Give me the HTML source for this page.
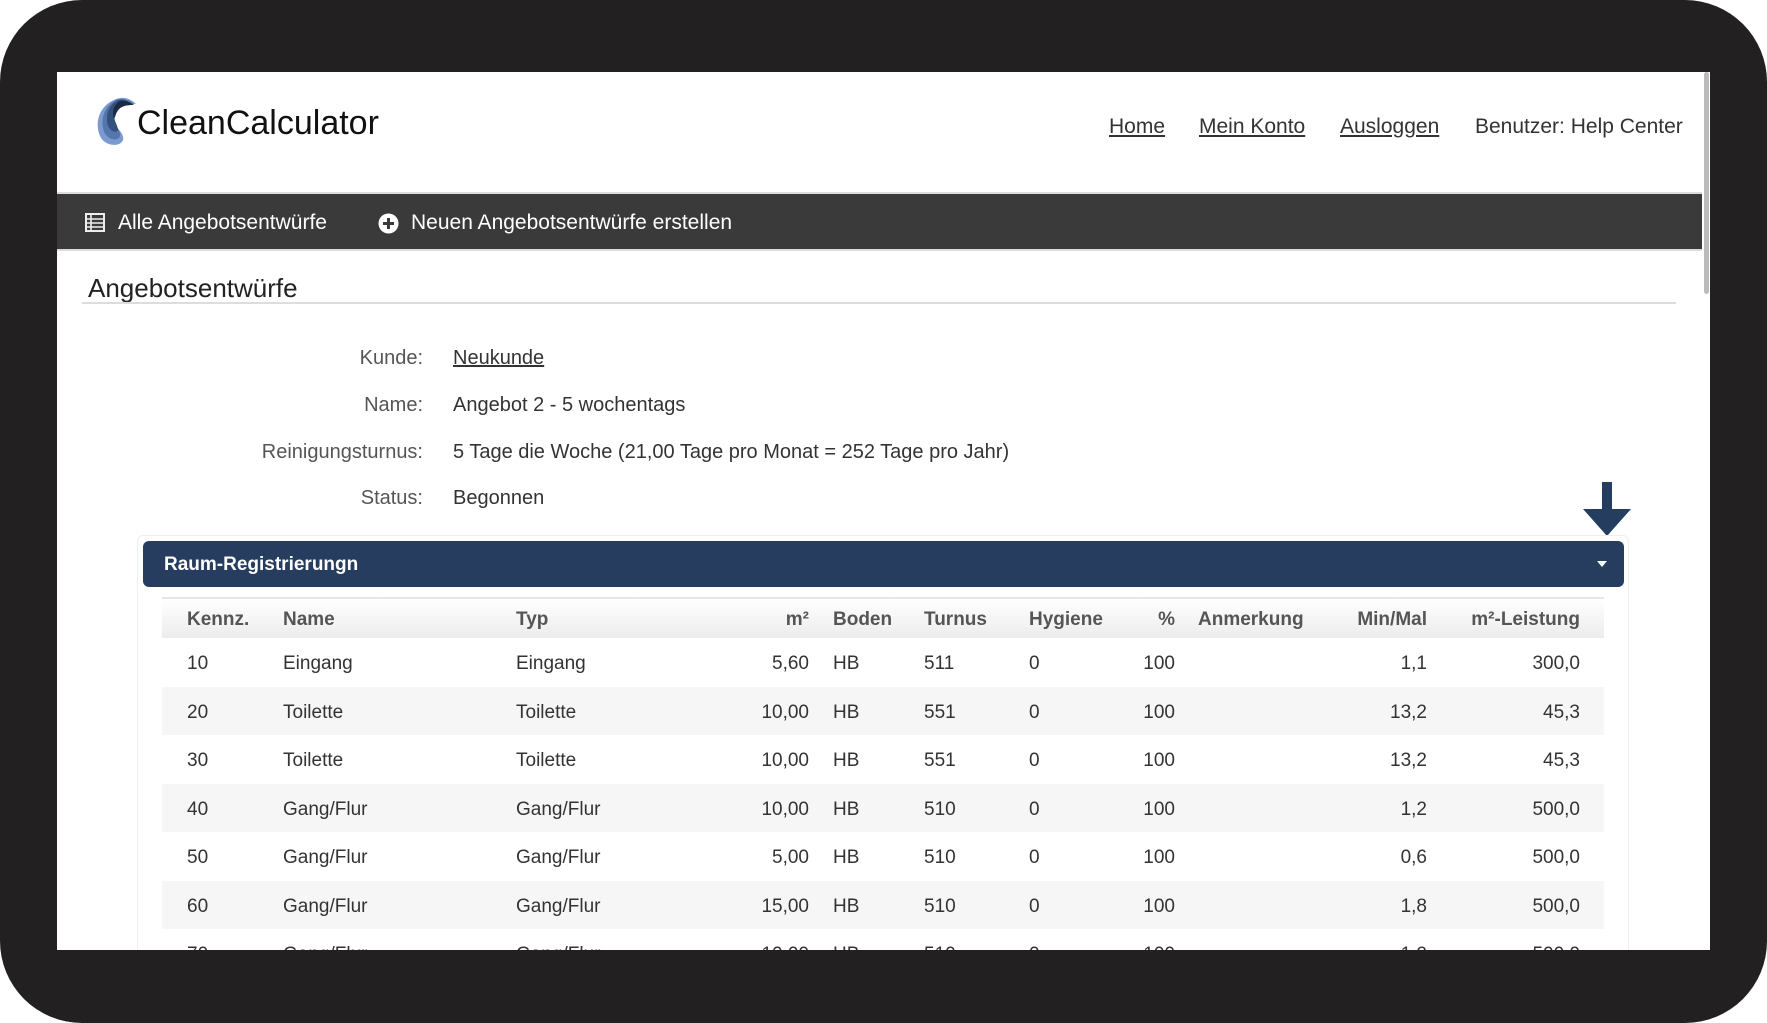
<!DOCTYPE html>
<html><head><meta charset="utf-8"><style>
*{margin:0;padding:0;box-sizing:border-box}
body{width:1767px;height:1023px;background:#fff;overflow:hidden;font-family:"Liberation Sans",sans-serif;position:relative}
.frame{position:absolute;left:0;top:0;width:1767px;height:1023px;background:#222021;border-radius:82px}
.screen{position:absolute;left:57px;top:72px;width:1653px;height:878px;background:#fff;overflow:hidden}
.a{position:absolute;white-space:nowrap}
.nav a{color:#333;text-decoration:underline}
.row{position:absolute;left:105px;width:1442px;height:48.5px}
.cell{position:absolute;top:2px;line-height:48.5px;font-size:19px;color:#333;white-space:nowrap}
.r{text-align:right}
</style></head><body>
<div class="frame"></div>
<div class="screen">
  <svg class="a" style="left:37px;top:24px" width="46" height="52" viewBox="0 0 46 52">
    <path d="M20 4 C6 10 0 26 6 40 C10 50 26 52 29 44 C31 36 18 30 18 20 C18 12 28 6 42 8 C36 2 28 0 20 4Z" fill="#7b9bd0"/>
    <path d="M22 4 C10 10 6 24 10 36 C14 44 24 46 26 40 C27 34 19 28 19 20 C19 12 28 7 40 8 C34 3 28 2 22 4Z" fill="#5575ad"/>
    <path d="M24 4 C14 9 11 20 14 30 C17 36 23 37 24 34 C24 30 20 25 20 19 C20 12 28 8 39 9 C33 4 28 3 24 4Z" fill="#34507c"/>
    <path d="M26 5 C19 9 18 16 20 23 C22 20 22 14 28 11 C32 9 37 9 40 9 C35 5 30 4 26 5Z" fill="#1b2b44"/>
  </svg>
  <div class="a" style="left:80px;top:32px;font-size:34px;color:#111">CleanCalculator</div>
  <div class="a nav" style="left:1052px;top:43px;font-size:21px;color:#333"><a>Home</a></div>
  <div class="a nav" style="left:1142px;top:43px;font-size:21px"><a>Mein Konto</a></div>
  <div class="a nav" style="left:1283px;top:43px;font-size:21px"><a>Ausloggen</a></div>
  <div class="a" style="left:1418px;top:43px;font-size:21px;color:#333">Benutzer: Help Center</div>
  <div class="a" style="left:1647px;top:0;width:5px;height:222px;background:#bbb;border-radius:3px"></div>
  <div class="a" style="left:0;top:120px;width:1645px;height:59px;background:#3a3a3a;border-top:2px solid #ddd;border-bottom:2px solid #ddd"></div>
  <svg class="a" style="left:28px;top:141px" width="20" height="19" viewBox="0 0 20 19"><rect x="1" y="1" width="18" height="17" fill="none" stroke="#eee" stroke-width="2"/><path d="M1 6H19M1 10H19M1 14H19M6 1V18" stroke="#eee" stroke-width="1.6"/></svg>
  <div class="a" style="left:61px;top:139px;font-size:21px;color:#fff">Alle Angebotsentwürfe</div>
  <svg class="a" style="left:321px;top:141px" width="21" height="21" viewBox="0 0 21 21"><circle cx="10.5" cy="10.5" r="10" fill="#fff"/><path d="M10.5 5V16M5 10.5H16" stroke="#3a3a3a" stroke-width="3"/></svg>
  <div class="a" style="left:354px;top:139px;font-size:21px;color:#fff">Neuen Angebotsentwürfe erstellen</div>
  <div class="a" style="left:31px;top:201px;font-size:26px;color:#222">Angebotsentwürfe</div>
  <div class="a" style="left:25px;top:230px;width:1594px;height:2px;background:#ddd"></div>
  <div class="a" style="left:166px;width:200px;text-align:right;top:275px;font-size:20px;color:#555">Kunde:</div>
  <div class="a" style="left:396px;top:275px;font-size:20px;color:#333;text-decoration:underline">Neukunde</div>
  <div class="a" style="left:166px;width:200px;text-align:right;top:322px;font-size:20px;color:#555">Name:</div>
  <div class="a" style="left:396px;top:322px;font-size:20px;color:#333">Angebot 2 - 5 wochentags</div>
  <div class="a" style="left:66px;width:300px;text-align:right;top:369px;font-size:20px;color:#555">Reinigungsturnus:</div>
  <div class="a" style="left:396px;top:369px;font-size:20px;color:#333">5 Tage die Woche (21,00 Tage pro Monat = 252 Tage pro Jahr)</div>
  <div class="a" style="left:166px;width:200px;text-align:right;top:415px;font-size:20px;color:#555">Status:</div>
  <div class="a" style="left:396px;top:415px;font-size:20px;color:#333">Begonnen</div>
  <svg class="a" style="left:1525px;top:410px" width="50" height="55" viewBox="0 0 50 55"><rect x="20" y="0" width="10" height="30" fill="#253d5e"/><path d="M1 27H49L25 54Z" fill="#253d5e"/></svg>
  <div class="a" style="left:80px;top:463px;width:1492px;height:430px;border:1px solid #eee;border-radius:6px"></div>
  <div class="a" style="left:86px;top:469px;width:1481px;height:46px;background:#263d5f;border-radius:6px"></div>
  <div class="a" style="left:107px;top:482px;font-size:19px;font-weight:bold;color:#fff">Raum-Registrierungn</div>
  <svg class="a" style="left:1540px;top:489px" width="10" height="6"><path d="M0 0H10L5 6Z" fill="#fff"/></svg>
  <div class="row" style="top:525px;height:41px;background:linear-gradient(#fff,#ececec);border-top:2px solid #e6e6e6"></div>
  <div class="row" style="top:525px;height:41px">
    <div class="cell" style="left:25px;line-height:41px;font-weight:bold;color:#555">Kennz.</div>
    <div class="cell" style="left:121px;line-height:41px;font-weight:bold;color:#555">Name</div>
    <div class="cell" style="left:354px;line-height:41px;font-weight:bold;color:#555">Typ</div>
    <div class="cell r" style="left:545px;width:102px;line-height:41px;font-weight:bold;color:#555">m²</div>
    <div class="cell" style="left:671px;line-height:41px;font-weight:bold;color:#555">Boden</div>
    <div class="cell" style="left:762px;line-height:41px;font-weight:bold;color:#555">Turnus</div>
    <div class="cell" style="left:867px;line-height:41px;font-weight:bold;color:#555">Hygiene</div>
    <div class="cell r" style="left:945px;width:68px;line-height:41px;font-weight:bold;color:#555">%</div>
    <div class="cell" style="left:1036px;line-height:41px;font-weight:bold;color:#555">Anmerkung</div>
    <div class="cell r" style="left:1165px;width:100px;line-height:41px;font-weight:bold;color:#555">Min/Mal</div>
    <div class="cell r" style="left:1268px;width:150px;line-height:41px;font-weight:bold;color:#555">m²-Leistung</div>
  </div>
  <div id="rows"></div>
</div>
<script>
var d=[["10","Eingang","5,60","511","1,1","300,0"],["20","Toilette","10,00","551","13,2","45,3"],["30","Toilette","10,00","551","13,2","45,3"],["40","Gang/Flur","10,00","510","1,2","500,0"],["50","Gang/Flur","5,00","510","0,6","500,0"],["60","Gang/Flur","15,00","510","1,8","500,0"],["70","Gang/Flur","10,00","510","1,2","500,0"]];
var h="";
d.forEach(function(r,i){
h+='<div class="row" style="top:'+(566+i*48.5)+'px;background:'+(i%2?'#f6f6f6':'#fff')+'">'+
'<div class="cell" style="left:25px">'+r[0]+'</div>'+
'<div class="cell" style="left:121px">'+r[1]+'</div>'+
'<div class="cell" style="left:354px">'+r[1]+'</div>'+
'<div class="cell r" style="left:545px;width:102px">'+r[2]+'</div>'+
'<div class="cell" style="left:671px">HB</div>'+
'<div class="cell" style="left:762px">'+r[3]+'</div>'+
'<div class="cell" style="left:867px">0</div>'+
'<div class="cell r" style="left:945px;width:68px">100</div>'+
'<div class="cell r" style="left:1165px;width:100px">'+r[4]+'</div>'+
'<div class="cell r" style="left:1268px;width:150px">'+r[5]+'</div></div>';
});
document.getElementById("rows").innerHTML=h;
</script>
</body></html>
